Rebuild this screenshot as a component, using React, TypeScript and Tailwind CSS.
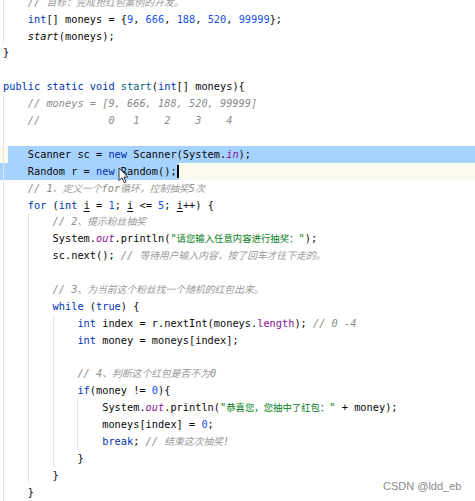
import React from "react";

type Tok = [string, string];

const CLS: Record<string, string> = {
  d: "text-[#080808]",
  k: "text-[#0033b3]",
  n: "text-[#1750eb]",
  c: "text-[#8c8c8c] italic",
  s: "text-[#067d17]",
  f: "text-[#871094] italic",
  p: "text-[#871094]",
  m: "text-[#00627a]",
  i: "text-[#080808] italic",
  u: "text-[#080808] underline decoration-[#080808] underline-offset-2",
};

const LINES: [number, Tok[]][] = [
  [1, [["c", "// 目标：完成抢红包案例的开发。"]]],
  [1, [["k", "int"], ["d", "[] moneys = {"], ["n", "9"], ["d", ", "], ["n", "666"], ["d", ", "], ["n", "188"], ["d", ", "], ["n", "520"], ["d", ", "], ["n", "99999"], ["d", "};"]]],
  [1, [["i", "start"], ["d", "(moneys);"]]],
  [0, [["d", "}"]]],
  [0, []],
  [0, [["k", "public static void "], ["m", "start"], ["d", "("], ["k", "int"], ["d", "[] moneys){"]]],
  [1, [["c", "// moneys = [9, 666, 188, 520, 99999]"]]],
  [1, [["c", "//           0   1    2    3    4"]]],
  [1, []],
  [1, [["d", "Scanner sc = "], ["k", "new"], ["d", " Scanner(System."], ["f", "in"], ["d", ");"]]],
  [1, [["d", "Random r = "], ["k", "new"], ["d", " Random();"]]],
  [1, [["c", "// 1、定义一个for循环，控制抽奖5次"]]],
  [1, [["k", "for"], ["d", " ("], ["k", "int "], ["u", "i"], ["d", " = "], ["n", "1"], ["d", "; "], ["u", "i"], ["d", " <= "], ["n", "5"], ["d", "; "], ["u", "i"], ["d", "++) {"]]],
  [2, [["c", "// 2、提示粉丝抽奖"]]],
  [2, [["d", "System."], ["f", "out"], ["d", ".println("], ["s", "\"请您输入任意内容进行抽奖：\""], ["d", ");"]]],
  [2, [["d", "sc.next(); "], ["c", "// 等待用户输入内容，按了回车才往下走的。"]]],
  [2, []],
  [2, [["c", "// 3、为当前这个粉丝找一个随机的红包出来。"]]],
  [2, [["k", "while"], ["d", " ("], ["k", "true"], ["d", ") {"]]],
  [3, [["k", "int"], ["d", " index = r.nextInt(moneys."], ["p", "length"], ["d", "); "], ["c", "// 0 -4"]]],
  [3, [["k", "int"], ["d", " money = moneys[index];"]]],
  [3, []],
  [3, [["c", "// 4、判断这个红包是否不为0"]]],
  [3, [["k", "if"], ["d", "(money != "], ["n", "0"], ["d", "){"]]],
  [4, [["d", "System."], ["f", "out"], ["d", ".println("], ["s", "\"恭喜您，您抽中了红包：\""], ["d", " + money);"]]],
  [4, [["d", "moneys[index] = "], ["n", "0"], ["d", ";"]]],
  [4, [["k", "break"], ["d", "; "], ["c", "// 结束这次抽奖!"]]],
  [3, [["d", "}"]]],
  [2, [["d", "}"]]],
  [1, [["d", "}"]]],
];

const GUIDES: [number, number, number][] = [
  [0, 0, 2],
  [0, 6, 29],
  [1, 13, 28],
  [2, 19, 27],
  [3, 24, 26],
];

function guideOn(level: number, line: number) {
  return GUIDES.some(([l, a, b]) => l === level && line >= a && line <= b);
}

function renderText(text: string, type: string) {
  const parts = text.split(/([\u3000-\u303f\u4e00-\u9fff\uff00-\uffef]+)/);
  const cjk =
    type === "c"
      ? "font-['Noto_Sans_CJK_SC',sans-serif] text-[9.8px] text-[#9a9a9a]"
      : "font-['Noto_Sans_CJK_SC',sans-serif] text-[9.4px]";
  return parts.map((p, i) =>
    i % 2 === 1 ? (
      <span key={i} className={cjk}>
        {p}
      </span>
    ) : (
      p
    )
  );
}

function Indent({ line, indent }: { line: number; indent: number }) {
  let count = indent;
  for (let l = 0; l < 5; l++) if (guideOn(l, line)) count = Math.max(count, l + 1);
  return (
    <>
      {Array.from({ length: count }).map((_, j) => (
        <span
          key={j}
          className={
            "inline-block h-[16.9px] w-[24.8px] shrink-0 " +
            (guideOn(j, line) ? "border-l border-[#e6e6e6]" : "")
          }
        />
      ))}
    </>
  );
}

function Code({ toks }: { toks: Tok[] }) {
  return (
    <span className="whitespace-pre">
      {toks.map(([t, s], i) => (
        <span key={i} className={CLS[t]}>
          {renderText(s, t)}
        </span>
      ))}
    </span>
  );
}

export default function App() {
  return (
    <div className="relative h-[501px] w-[475px] overflow-hidden bg-white font-['DejaVu_Sans_Mono',monospace] text-[10.3px] leading-[16.9px]">
      <div className="mt-[-6.2px] flex flex-col">
        {LINES.map(([indent, toks], idx) => {
          if (idx === 9) {
            return (
              <div
                key={idx}
                className="flex h-[16.9px] bg-[linear-gradient(to_right,#fcfaed_8px,#a6d2ff_8px)] pl-[3px]"
              >
                <Indent line={idx} indent={indent} />
                <Code toks={toks} />
              </div>
            );
          }
          if (idx === 10) {
            return (
              <div key={idx} className="flex h-[16.9px] bg-[#fcfaed]">
                <div className="flex items-center bg-[#a6d2ff] pl-[3px]">
                  <Indent line={idx} indent={indent} />
                  <Code toks={toks} />
                  <span className="ml-[0.5px] inline-block h-[13px] w-[1.5px] bg-[#000]" />
                </div>
              </div>
            );
          }
          return (
            <div key={idx} className="flex h-[16.9px] pl-[3px]">
              <Indent line={idx} indent={indent} />
              <Code toks={toks} />
            </div>
          );
        })}
      </div>

      {/* mouse pointer */}
      <svg
        className="absolute left-[118px] top-[167px]"
        width="11"
        height="17"
        viewBox="0 0 11 17"
      >
        <path
          d="M1 1 L1 13.5 L4 10.8 L6.2 15.6 L8 14.8 L5.9 10.1 L9.8 10.1 Z"
          fill="#ffffff"
          stroke="#333"
          strokeWidth="1"
          strokeLinejoin="round"
        />
      </svg>

      {/* watermark */}
      <div className="absolute left-[383px] top-[478px] font-['Liberation_Sans',Arial,sans-serif] text-[11px] leading-[16px] text-[#8a8a8a]">
        CSDN @ldd_eb
      </div>
    </div>
  );
}
